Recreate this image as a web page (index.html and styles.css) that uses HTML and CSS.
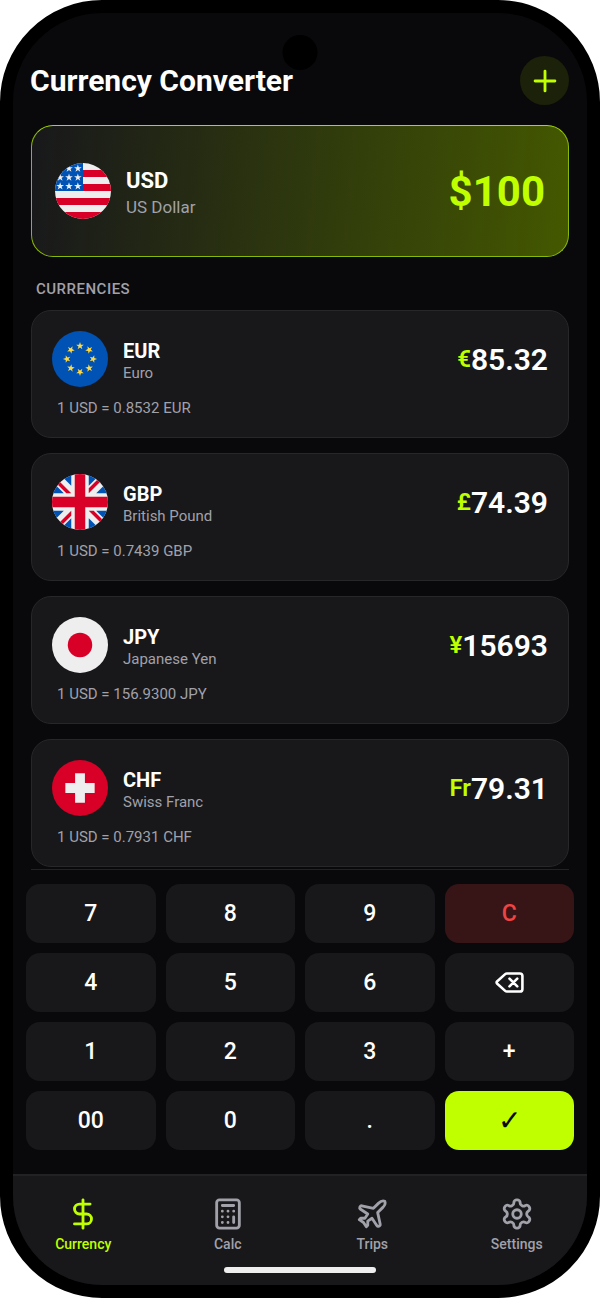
FILE: index.html
```
<!DOCTYPE html>
<html lang="en">

<head>
	<meta charset="UTF-8">
	<meta name="viewport" content="width=device-width, initial-scale=1.0">
	<title>Currency Converter</title>
	<link rel="stylesheet" href="styles.css">
</head>

<body>
	<div class="phone">
		<div class="camera"></div>

		<header class="header">
			<h1>Currency Converter</h1>
			<button type="button" class="add-btn" aria-label="Add currency">
				<svg class="icon" viewBox="0 0 24 24"><path d="M5 12h14M12 5v14" /></svg>
			</button>
		</header>

		<main class="content">
			<section class="base">
				<svg class="flag" viewBox="0 0 512 512">
					<path fill="#eee" d="M0 0h512v512H0z" />
					<path fill="#d80027" d="M224 64h288v64H224zM224 192h288v64H224zM0 320h512v64H0zM0 448h512v64H0z" />
					<path fill="#0052b4" d="M0 0h256v256H0z" />
					<path fill="#eee" d="m187 243 57-41h-70l57 41-22-67zm-81 0 57-41H93l57 41-22-67zm-81 0 57-41H12l57 41-22-67zm162-81 57-41h-70l57 41-22-67zm-81 0 57-41H93l57 41-22-67zm-81 0 57-41H12l57 41-22-67zm162-82 57-41h-70l57 41-22-67zm-81 0 57-41H93l57 41-22-67zm-81 0 57-41H12l57 41-22-67z" />
				</svg>
				<div class="names">
					<div class="code">USD</div>
					<div class="name">US Dollar</div>
				</div>
				<div class="amount">$100</div>
			</section>

			<h2>CURRENCIES</h2>

			<ul class="list">
				<li class="card">
					<div class="row">
						<svg class="flag" viewBox="0 0 512 512">
							<defs>
								<path id="star" d="m256 100 8.300 25.500h26.800l-21.700 15.800 8.300 25.500-21.700-15.800-21.700 15.800 8.300-25.500-21.700-15.800h26.800z" />
							</defs>
							<path fill="#0052b4" d="M0 0h512v512H0z" />
							<g fill="#ffda44">
								<use href="#star" />
								<use href="#star" transform="rotate(45 256 256)" />
								<use href="#star" transform="rotate(90 256 256)" />
								<use href="#star" transform="rotate(135 256 256)" />
								<use href="#star" transform="rotate(180 256 256)" />
								<use href="#star" transform="rotate(225 256 256)" />
								<use href="#star" transform="rotate(270 256 256)" />
								<use href="#star" transform="rotate(315 256 256)" />
							</g>
						</svg>
						<div class="names">
							<div class="code">EUR</div>
							<div class="name">Euro</div>
						</div>
						<div class="amount"><span>€</span>85.32</div>
					</div>
					<p class="rate">1 USD = 0.8532 EUR</p>
				</li>

				<li class="card">
					<div class="row">
						<svg class="flag" viewBox="0 0 512 512">
							<path fill="#eee" d="M0 0h512v512H0z" />
							<path fill="#0052b4" d="M336 0v108L444 0zm176 68L404 176h108zM0 176h108L0 68zM68 0l108 108V0zm108 512V404L68 512zM0 444l108-108H0zm512-108H404l108 108zm-68 176L336 404v108z" />
							<path fill="#d80027" d="M0 0v45l131 131h45zm208 0v208H0v96h208v208h96V304h208v-96H304V0zm259 0L336 131v45L512 0zM176 336 0 512h45l131-131zm160 0 176 176v-45L381 336z" />
						</svg>
						<div class="names">
							<div class="code">GBP</div>
							<div class="name">British Pound</div>
						</div>
						<div class="amount"><span>£</span>74.39</div>
					</div>
					<p class="rate">1 USD = 0.7439 GBP</p>
				</li>

				<li class="card">
					<div class="row">
						<svg class="flag" viewBox="0 0 512 512">
							<path fill="#eee" d="M0 0h512v512H0z" />
							<circle cx="256" cy="256" r="112" fill="#d80027" />
						</svg>
						<div class="names">
							<div class="code">JPY</div>
							<div class="name">Japanese Yen</div>
						</div>
						<div class="amount"><span>¥</span>15693</div>
					</div>
					<p class="rate">1 USD = 156.9300 JPY</p>
				</li>

				<li class="card">
					<div class="row">
						<svg class="flag" viewBox="0 0 512 512">
							<path fill="#d80027" d="M0 0h512v512H0z" />
							<path fill="#eee" d="M390 211h-89v-89h-90v89h-89v90h89v89h90v-89h89z" />
						</svg>
						<div class="names">
							<div class="code">CHF</div>
							<div class="name">Swiss Franc</div>
						</div>
						<div class="amount"><span>Fr</span>79.31</div>
					</div>
					<p class="rate">1 USD = 0.7931 CHF</p>
				</li>
			</ul>
		</main>

		<div class="keypad">
			<button type="button">7</button>
			<button type="button">8</button>
			<button type="button">9</button>
			<button type="button" class="clear">C</button>
			<button type="button">4</button>
			<button type="button">5</button>
			<button type="button">6</button>
			<button type="button" aria-label="Delete">
				<svg class="icon" viewBox="0 0 24 24"><path d="M10 5a2 2 0 0 0-1.344.519l-6.328 5.740a1 1 0 0 0 0 1.481l6.328 5.741A2 2 0 0 0 10 19h10a2 2 0 0 0 2-2V7a2 2 0 0 0-2-2zM12 9l6 6M18 9l-6 6" /></svg>
			</button>
			<button type="button">1</button>
			<button type="button">2</button>
			<button type="button">3</button>
			<button type="button">+</button>
			<button type="button">00</button>
			<button type="button">0</button>
			<button type="button">.</button>
			<button type="button" class="done">✓</button>
		</div>

		<nav class="tabs">
			<a href="#currency" class="active">
				<svg class="icon" viewBox="0 0 24 24"><path d="M12 2v20M17 5H9.500a3.500 3.500 0 0 0 0 7h5a3.500 3.500 0 0 1 0 7H6" /></svg>
				Currency
			</a>
			<a href="#calc">
				<svg class="icon" viewBox="0 0 24 24"><rect x="4" y="2" width="16" height="20" rx="2" /><path d="M8 6h8M16 14v4M16 10h.01M12 10h.01M8 10h.01M12 14h.01M8 14h.01M12 18h.01M8 18h.01" /></svg>
				Calc
			</a>
			<a href="#trips">
				<svg class="icon" viewBox="0 0 24 24"><path d="M17.800 19.200 16 11l3.500-3.500C21 6 21.500 4 21 3c-1-.5-3 0-4.500 1.500L13 8 4.800 6.200c-.5-.1-.9.1-1.100.5l-.3.5c-.2.5-.1 1 .3 1.300L9 12l-2 3H4l-1 1 3 2 2 3 1-1v-3l3-2 3.500 5.300c.3.4.8.5 1.300.3l.5-.2c.4-.3.6-.7.5-1.200z" /></svg>
				Trips
			</a>
			<a href="#settings">
				<svg class="icon" viewBox="0 0 24 24"><path d="M12.220 2h-.44a2 2 0 0 0-2 2v.18a2 2 0 0 1-1 1.730l-.43.25a2 2 0 0 1-2 0l-.15-.08a2 2 0 0 0-2.730.73l-.22.38a2 2 0 0 0 .73 2.730l.15.1a2 2 0 0 1 1 1.720v.51a2 2 0 0 1-1 1.740l-.15.09a2 2 0 0 0-.73 2.730l.22.38a2 2 0 0 0 2.730.73l.15-.08a2 2 0 0 1 2 0l.43.25a2 2 0 0 1 1 1.730V20a2 2 0 0 0 2 2h.44a2 2 0 0 0 2-2v-.18a2 2 0 0 1 1-1.730l.43-.25a2 2 0 0 1 2 0l.15.08a2 2 0 0 0 2.730-.73l.22-.39a2 2 0 0 0-.73-2.730l-.15-.08a2 2 0 0 1-1-1.740v-.5a2 2 0 0 1 1-1.740l.15-.09a2 2 0 0 0 .73-2.730l-.22-.38a2 2 0 0 0-2.730-.73l-.15.08a2 2 0 0 1-2 0l-.43-.25a2 2 0 0 1-1-1.730V4a2 2 0 0 0-2-2z" /><circle cx="12" cy="12" r="3" /></svg>
				Settings
			</a>
			<div class="home-bar"></div>
		</nav>
	</div>
</body>

</html>
```
FILE: styles.css
```
* {
	margin: 0;
	padding: 0;
	box-sizing: border-box;
}

body {
	background-color: #fff;
	color: #fff;
	font-family: Roboto, "Liberation Sans", sans-serif;
}

button {
	border: none;
	color: inherit;
	font-family: inherit;
}

.phone {
	position: relative;
	display: flex;
	flex-direction: column;
	min-height: calc(100vh - 2px);
	border: 13px solid #000;
	border-radius: 102px;
	background-color: #09090b;
	overflow: hidden;
}

.camera {
	position: absolute;
	top: 22px;
	left: 50%;
	width: 35px;
	height: 35px;
	border-radius: 50%;
	background-color: #000;
	transform: translateX(-50%);
}

.icon {
	width: 34px;
	height: 34px;
	fill: none;
	stroke: currentColor;
	stroke-width: 2;
	stroke-linecap: round;
	stroke-linejoin: round;
}

.header {
	display: flex;
	justify-content: space-between;
	align-items: center;
	padding: 43px 18px 20px 17px;
}

h1 {
	font-size: 30px;
	font-weight: 700;
}

.add-btn {
	display: flex;
	justify-content: center;
	align-items: center;
	width: 49px;
	height: 49px;
	border-radius: 50%;
	background-color: #1c210a;
	color: #bfff00;
}

.content {
	flex: 1;
	margin: 0 18px;
	padding-bottom: 2px;
	border-bottom: 1px solid #222225;
}

.base {
	display: flex;
	align-items: center;
	gap: 15px;
	height: 132px;
	padding: 0 23px;
	border: 1px solid #8ab80a;
	border-top-color: #a4db04;
	border-radius: 22px;
	background-image: linear-gradient(95deg, #18181b, #445800);
}

.flag {
	flex: none;
	width: 56px;
	height: 56px;
	border-radius: 50%;
}

.names {
	flex: 1;
	padding-top: 4px;
}

.code {
	font-size: 20px;
	font-weight: 700;
	line-height: 24px;
}

.name {
	font-size: 15px;
	line-height: 20px;
	color: #a1a1aa;
}

.amount {
	display: flex;
	align-items: center;
	font-size: 30px;
	font-weight: 600;
}

.amount span {
	font-size: 24px;
	color: #bfff00;
}

.base .code {
	font-size: 22px;
	line-height: 28px;
}

.base .name {
	font-size: 17px;
	line-height: 24px;
}

.base .amount {
	font-size: 42px;
	font-weight: 700;
	color: #bfff00;
}

h2 {
	margin: 23px 5px 12px;
	font-size: 15px;
	font-weight: 500;
	line-height: 18px;
	letter-spacing: 0.5px;
	color: #a1a1aa;
}

.list {
	display: flex;
	flex-direction: column;
	gap: 15px;
	list-style: none;
}

.card {
	padding: 20px;
	border: 1px solid #27272a;
	border-radius: 20px;
	background-color: #18181b;
}

.row {
	display: flex;
	align-items: center;
	gap: 15px;
}

.rate {
	margin-top: 12px;
	padding-left: 5px;
	font-size: 15px;
	line-height: 18px;
	color: #a1a1aa;
}

.keypad {
	display: grid;
	grid-template-columns: repeat(4, 1fr);
	gap: 10px;
	padding: 14px 13px 24px;
}

.keypad button {
	display: flex;
	justify-content: center;
	align-items: center;
	height: 59px;
	border-radius: 14px;
	background-color: #18181b;
	font-size: 23px;
	font-weight: 500;
}

.keypad .icon {
	width: 31px;
	height: 31px;
}

.keypad .clear {
	background-color: #371517;
	color: #ef4444;
}

.keypad .done {
	background-color: #bfff00;
	color: #09090b;
	font-size: 28px;
	font-weight: 400;
}

.tabs {
	position: relative;
	display: flex;
	margin: 0 -2px;
	padding: 21px 0 32px;
	border-top: 2px solid #222225;
	background-color: #18181b;
}

.tabs a {
	flex: 1;
	display: flex;
	flex-direction: column;
	align-items: center;
	gap: 4px;
	font-size: 14px;
	font-weight: 500;
	line-height: 18px;
	color: #a1a1aa;
	text-decoration: none;
}

.tabs .active {
	color: #bfff00;
}

.home-bar {
	position: absolute;
	bottom: 12px;
	left: 50%;
	width: 152px;
	height: 6px;
	border-radius: 3px;
	background-color: #eee;
	transform: translateX(-50%);
}
```
